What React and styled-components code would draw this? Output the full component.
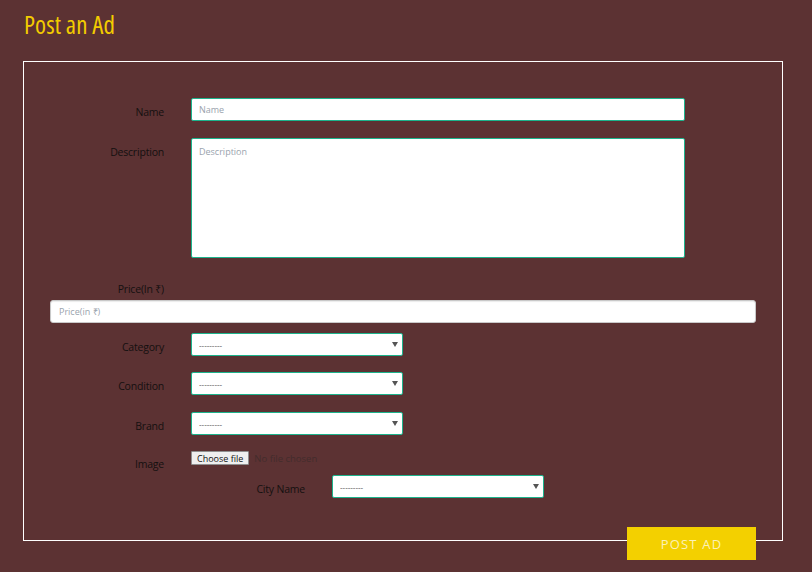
import React from "react";
import styled, { createGlobalStyle } from "styled-components";

const Global = createGlobalStyle`
  html, body { margin: 0; padding: 0; }
  body {
    background: #5c3233;
    font-family: "Open Sans", "Noto Sans", sans-serif;
    width: 812px;
    height: 572px;
    overflow: hidden;
  }
`;

const Page = styled.div`
  padding: 7px 30px 0 23px;
`;

const Title = styled.h1`
  margin: 0 0 19px 1px;
  font-family: "Open Sans", sans-serif;
  font-stretch: 75%;
  font-weight: 400;
  font-size: 25px;
  line-height: 35px;
  color: #f3cc00;
  letter-spacing: 0.1px;
`;

const Box = styled.div`
  border: 1px solid #ffffff;
  width: 758px;
  padding: 36px 0 0 0;
`;

const Row = styled.div`
  display: grid;
  grid-template-columns: 140px ${(p) => p.$w || 494}px;
  column-gap: 27px;
  align-items: start;
  margin-top: ${(p) => p.$mt || 0}px;
  margin-left: ${(p) => p.$ml || 0}px;
`;

const Label = styled.label`
  display: block;
  text-align: right;
  padding-top: ${(p) => (p.$pt != null ? p.$pt : 7)}px;
  font-size: 10.5px;
  line-height: 15px;
  color: #141010;
  letter-spacing: -0.2px;
`;

const fieldBase = `
  box-sizing: border-box;
  display: block;
  width: 100%;
  border: 1px solid #1cb38c;
  border-radius: 2px;
  background: #ffffff;
  font-family: "Open Sans", sans-serif;
  font-size: 9px;
  color: #555;
  padding: 0 7px;
  outline: none;
  &::placeholder { color: #9aa3ad; }
`;

const TextInput = styled.input`
  ${fieldBase}
  height: 23px;
`;

const TextArea = styled.textarea`
  ${fieldBase}
  height: 120px;
  padding-top: 6px;
  resize: none;
`;

const PriceLabelRow = styled.div`
  display: grid;
  grid-template-columns: 140px;
  margin-top: 17px;
  height: 25px;
`;

const PriceInput = styled.input`
  ${fieldBase}
  border: 1px solid #c9c9c9;
  border-radius: 3px;
  width: 706px;
  height: 23px;
  margin-left: 26px;
  padding-left: 8px;
  box-shadow: inset 0 1px 1px rgba(0,0,0,0.08);
`;

const SelectWrap = styled.div`
  position: relative;
  width: 212px;
  &::after {
    content: "";
    position: absolute;
    right: 5px;
    top: 9px;
    border-left: 3px solid transparent;
    border-right: 3px solid transparent;
    border-top: 5px solid #555;
    pointer-events: none;
  }
`;

const Select = styled.select`
  ${fieldBase}
  appearance: none;
  -webkit-appearance: none;
  height: 23px;
  font-size: 8px;
  color: #444;
  padding-left: 7px;
`;

const FilePicker = styled.label`
  display: flex;
  align-items: center;
  gap: 5px;
  height: 14px;
  cursor: pointer;
  input { display: none; }
`;

const FileButton = styled.span`
  box-sizing: border-box;
  display: inline-flex;
  align-items: center;
  height: 14px;
  padding: 0 5px;
  border: 1px solid #8f8f8f;
  border-radius: 1px;
  background: #efefef;
  font-family: "Open Sans", sans-serif;
  font-size: 9px;
  color: #111;
`;

const FileStatus = styled.span`
  font-family: "Open Sans", sans-serif;
  font-size: 9.5px;
  color: #432c2c;
`;

const Actions = styled.div`
  display: flex;
  justify-content: flex-end;
  margin: 29px 26px -20px 0;
`;

const Submit = styled.button`
  width: 129px;
  height: 33px;
  border: none;
  background: #f3d000;
  color: #fbf1b8;
  font-family: "Open Sans", sans-serif;
  font-size: 13px;
  letter-spacing: 1.2px;
  cursor: pointer;
`;

function SelectField() {
  return (
    <SelectWrap>
      <Select defaultValue="">
        <option value="">---------</option>
      </Select>
    </SelectWrap>
  );
}

export default function App() {
  return (
    <>
      <Global />
      <Page>
        <Title>Post an Ad</Title>
        <Box>
          <Row>
            <Label>Name</Label>
            <TextInput placeholder="Name" />
          </Row>
          <Row $mt={17}>
            <Label>Description</Label>
            <TextArea placeholder="Description" />
          </Row>
          <PriceLabelRow>
            <Label>Price(In ₹)</Label>
          </PriceLabelRow>
          <PriceInput placeholder="Price(in ₹)" />
          <Row $mt={10} $w={212}>
            <Label>Category</Label>
            <SelectField />
          </Row>
          <Row $mt={16} $w={212}>
            <Label>Condition</Label>
            <SelectField />
          </Row>
          <Row $mt={17} $w={212}>
            <Label>Brand</Label>
            <SelectField />
          </Row>
          <Row $mt={16} $w={300}>
            <Label $pt={6}>Image</Label>
            <FilePicker>
              <input type="file" />
              <FileButton>Choose file</FileButton>
              <FileStatus>No file chosen</FileStatus>
            </FilePicker>
          </Row>
          <Row $mt={3} $ml={141} $w={212}>
            <Label>City Name</Label>
            <SelectField />
          </Row>
          <Actions>
            <Submit>POST AD</Submit>
          </Actions>
        </Box>
      </Page>
    </>
  );
}
